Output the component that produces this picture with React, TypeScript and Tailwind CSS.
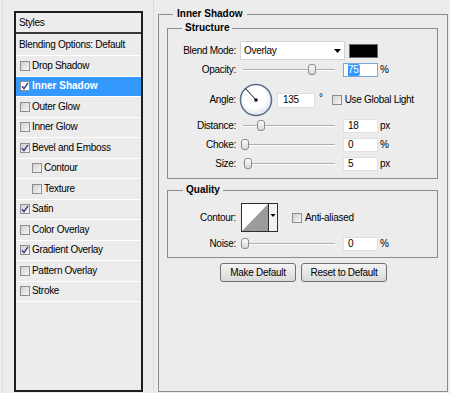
import React from "react";

type StyleRow = { label: string; checked: boolean; indent?: boolean; active?: boolean };

const styleRows: StyleRow[] = [
  { label: "Drop Shadow", checked: false },
  { label: "Inner Shadow", checked: true, active: true },
  { label: "Outer Glow", checked: false },
  { label: "Inner Glow", checked: false },
  { label: "Bevel and Emboss", checked: true },
  { label: "Contour", checked: false, indent: true },
  { label: "Texture", checked: false, indent: true },
  { label: "Satin", checked: true },
  { label: "Color Overlay", checked: false },
  { label: "Gradient Overlay", checked: true },
  { label: "Pattern Overlay", checked: false },
  { label: "Stroke", checked: false },
];

const Check = ({ checked, light }: { checked: boolean; light?: boolean }) => (
  <span
    className={`flex h-[10px] w-[10px] shrink-0 items-center justify-center border border-[#8e8e8e] ${
      light ? "bg-white" : "bg-linear-to-br from-[#d0d0d0] to-[#f7f7f7]"
    }`}
  >
    {checked && (
      <svg width="8" height="8" viewBox="0 0 8 8">
        <path d="M1 4.2 L3 6.6 L7 0.8" fill="none" stroke="#34398c" strokeWidth="1.4" />
      </svg>
    )}
  </span>
);

const Label = ({ children }: { children: React.ReactNode }) => (
  <span className="w-[68px] shrink-0 text-right">{children}</span>
);

const Slider = ({ pos }: { pos: number }) => (
  <div className="relative ml-[5px] h-full w-[94px] shrink-0">
    <div className="absolute left-[2px] right-0 top-[6px] h-[2px] border-t border-[#aeaeae] bg-white" />
    <div
      className="absolute top-[1px] h-[11px] w-[8px] rounded-[3px] border border-[#8a8a8a] bg-linear-to-b from-white to-[#d6d6d6]"
      style={{ left: pos }}
    />
  </div>
);

const NumBox = ({ value }: { value: string }) => (
  <div className="ml-[8px] flex h-[14px] w-[35px] items-center border border-[#e0e0e0] bg-white pl-[4px]">
    {value}
  </div>
);

const SliderRow = ({ label, pos, value, unit, className }: { label: string; pos: number; value: string; unit: string; className?: string }) => (
  <div className={`flex h-[14px] items-center ${className ?? ""}`}>
    <Label>{label}</Label>
    <Slider pos={pos} />
    <NumBox value={value} />
    <span className="ml-[2px]">{unit}</span>
  </div>
);

const Dial = () => (
  <svg width="34" height="34" viewBox="0 0 34 34" className="ml-[3px] shrink-0">
    <defs>
      <radialGradient id="dialFill" cx="0.45" cy="0.4" r="0.6">
        <stop offset="0.6" stopColor="#ffffff" />
        <stop offset="1" stopColor="#dfe3ea" />
      </radialGradient>
    </defs>
    <circle cx="17" cy="17" r="15.5" fill="url(#dialFill)" stroke="#5a6b8c" strokeWidth="1.5" />
    <line x1="17" y1="17" x2="6.5" y2="5.5" stroke="#111" strokeWidth="1" />
    <rect x="15.5" y="15.5" width="3" height="3" fill="#000" />
  </svg>
);

const ContourSwatch = () => (
  <svg width="37" height="29" viewBox="0 0 37 29" className="ml-[5px] shrink-0">
    <rect x="0.5" y="0.5" width="36" height="28" fill="#f2f2f2" stroke="#2e2e2e" />
    <rect x="1" y="1" width="26" height="27" fill="#ffffff" />
    <polygon points="1,28 27,1 27,28" fill="#9b9b9b" />
    <line x1="27.5" y1="1" x2="27.5" y2="28" stroke="#2e2e2e" />
    <polygon points="29.5,11 34.5,11 32,14" fill="#000" />
  </svg>
);

export default function App() {
  return (
    <div className="flex h-[393px] w-[450px] overflow-hidden bg-[#ececec] font-['Liberation_Sans',Arial,sans-serif] text-[10px] leading-[12px] tracking-[-0.3px] text-black">
      {/* styles list */}
      <div className="ml-[2px] w-[152px] shrink-0 border-x border-[#dcdcdc] pl-[11px] pt-[11px]">
        <div className="flex h-[381px] w-[129px] flex-col border-2 border-[#1e1e1e]">
          <div className="flex h-[21px] items-center border-b-2 border-[#3a3a3a] pl-[3px]">Styles</div>
          <div className="flex h-[22px] items-center border-b border-white pl-[3px]">Blending Options: Default</div>
          {styleRows.map((row) => (
            <div
              key={row.label}
              className={`flex h-[20.5px] items-center gap-[2px] border-b border-white ${row.indent ? "pl-[16px]" : "pl-[4px]"} ${
                row.active ? "bg-[#3399ff] font-bold tracking-normal text-white" : ""
              }`}
            >
              <Check checked={row.checked} light={row.active} />
              <span>{row.label}</span>
            </div>
          ))}
        </div>
      </div>

      {/* settings */}
      <fieldset className="ml-[4px] mt-[8px] h-[384px] w-[290px] shrink-0 border border-[#8c8c8c] pl-[8px] pr-[9px]">
        <legend className="ml-[6px] px-[4px] font-bold leading-[12px] tracking-normal">Inner Shadow</legend>

        <fieldset className="mt-[2px] border border-[#8c8c8c] pb-[7px] pt-[7px]">
          <legend className="ml-[14px] px-[3px] font-bold leading-[12px] tracking-normal">Structure</legend>

          <div className="flex h-[19px] items-center">
            <Label>Blend Mode:</Label>
            <div className="ml-[4px] flex h-[19px] w-[105px] items-center justify-between border border-[#d4d4d4] bg-white pl-[3px] pr-[3px]">
              <span>Overlay</span>
              <svg width="7" height="4" viewBox="0 0 7 4">
                <polygon points="0,0 7,0 3.5,4" fill="#000" />
              </svg>
            </div>
            <div className="ml-[4px] h-[14px] w-[29px] border border-[#6b6b6b] bg-black" />
          </div>

          <div className="mt-[3px] flex h-[14px] items-center">
            <Label>Opacity:</Label>
            <Slider pos={67} />
            <div className="ml-[8px] flex h-[14px] w-[35px] items-center border border-[#7ea6d4] bg-white pl-[4px]">
              <span className="bg-[#3399ff] text-white">75</span>
              <span className="h-[10px] w-[1px] bg-[#f08a24]" />
            </div>
            <span className="ml-[2px]">%</span>
          </div>

          <div className="mt-[6px] flex h-[34px] items-center">
            <Label>Angle:</Label>
            <Dial />
            <div className="ml-[4px] flex h-[15px] w-[38px] items-center border border-[#e0e0e0] bg-white pl-[5px]">135</div>
            <span className="ml-[4px] self-start pt-[9px]">°</span>
            <span className="ml-[9px]"><Check checked={false} /></span>
            <span className="ml-[3px]">Use Global Light</span>
          </div>

          <SliderRow className="mt-[2px]" label="Distance:" pos={16} value="18" unit="px" />
          <SliderRow className="mt-[5px]" label="Choke:" pos={0} value="0" unit="%" />
          <SliderRow className="mt-[5px]" label="Size:" pos={3} value="5" unit="px" />
        </fieldset>

        <fieldset className="mt-[5px] border border-[#8c8c8c] pb-[6px] pt-[7px]">
          <legend className="ml-[15px] px-[3px] font-bold leading-[12px] tracking-normal">Quality</legend>

          <div className="flex h-[29px] items-center">
            <Label>Contour:</Label>
            <ContourSwatch />
            <span className="ml-[14px]"><Check checked={false} /></span>
            <span className="ml-[3px]">Anti-aliased</span>
          </div>

          <SliderRow className="mt-[5px]" label="Noise:" pos={0} value="0" unit="%" />
        </fieldset>

        <div className="mt-[5px] flex justify-center gap-[5px] pl-[2px]">
          <button className="h-[19px] w-[76px] rounded-[3px] border border-[#707070] bg-linear-to-b from-[#f4f4f4] to-[#d9d9d9]">
            Make Default
          </button>
          <button className="h-[19px] w-[86px] rounded-[3px] border border-[#707070] bg-linear-to-b from-[#f4f4f4] to-[#d9d9d9]">
            Reset to Default
          </button>
        </div>
      </fieldset>
    </div>
  );
}
